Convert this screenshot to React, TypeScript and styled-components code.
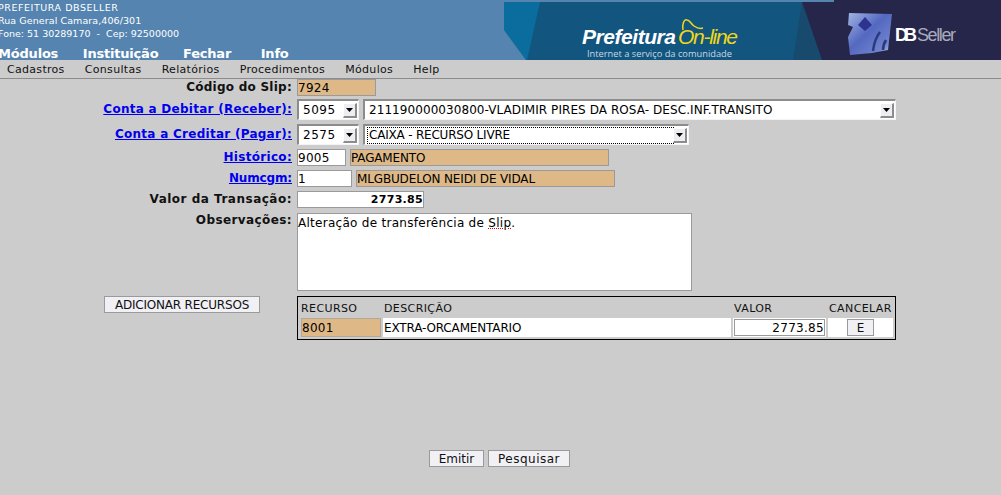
import styled, { createGlobalStyle } from "styled-components";

const GlobalStyle = createGlobalStyle`
  html, body {
    margin: 0;
    padding: 0;
    background: #cccccc;
    overflow: hidden;
  }
  body {
    font-family: "DejaVu Sans", sans-serif;
    font-size: 12px;
    color: #000;
  }
`;

const Page = styled.div`
  width: 1001px;
  height: 495px;
  display: flex;
  flex-direction: column;
`;

const Header = styled.header`
  height: 60px;
  background: #5584b0;
  display: flex;
  justify-content: space-between;
  overflow: hidden;
`;

const HeaderLeft = styled.div`
  display: flex;
  flex-direction: column;
  color: #fff;
`;

const Address = styled.div`
  margin-left: -2px;
  padding-top: 1px;
  white-space: nowrap;
`;

const AddressLine = styled.div<{ $spacing: number }>`
  font-size: 9.5px;
  line-height: 13px;
  letter-spacing: ${({ $spacing }) => $spacing}px;
`;

const TopNav = styled.nav`
  display: flex;
  gap: 24.6px;
  margin: 6px 0 0 -2px;
  font-size: 13px;
  font-weight: bold;
  line-height: 15px;
  letter-spacing: -0.2px;
`;

const TopNavItem = styled.span<{ $gap?: number }>`
  margin-right: ${({ $gap }) => $gap ?? 0}px;
`;

const Banner = styled.svg`
  width: 497px;
  height: 60px;
  display: block;
  flex: none;
`;

const MenuBar = styled.nav`
  height: 18px;
  border-bottom: 1px solid #8c8c8c;
  display: flex;
  align-items: center;
  gap: 20.2px;
  padding-left: 7px;
  font-size: 11px;
  letter-spacing: 0.3px;
  color: #111;
`;

const Form = styled.form`
  display: grid;
  grid-template-columns: 292px 1fr;
  column-gap: 5px;
  margin: 0;
`;

const Label = styled.div<{ $height: number; $top?: number; $spacing?: number }>`
  height: ${({ $height }) => $height}px;
  margin-top: ${({ $top }) => $top ?? 0}px;
  line-height: ${({ $height }) => $height}px;
  text-align: right;
  font-size: 12px;
  font-weight: bold;
  letter-spacing: ${({ $spacing }) => $spacing ?? 0.25}px;
  white-space: nowrap;
  color: #111;
`;

const TextLabel = styled(Label)`
  line-height: 14px;
`;

const LinkLabel = styled.a`
  color: #0000ee;
  text-decoration: underline;
  cursor: pointer;
`;

const Field = styled.div<{ $height: number; $top?: number; $gap?: number }>`
  height: ${({ $height }) => $height}px;
  margin-top: ${({ $top }) => $top ?? 0}px;
  display: flex;
  gap: ${({ $gap }) => $gap ?? 4}px;
`;

const Input = styled.input<{ $width: number; $locked?: boolean; $bold?: boolean; $right?: boolean; $spacing?: number }>`
  box-sizing: border-box;
  width: ${({ $width }) => $width}px;
  height: 100%;
  margin: 0;
  padding: 0;
  border: 1px solid #9a9a9a;
  border-radius: 0;
  outline: none;
  background: ${({ $locked }) => ($locked ? "#deb887" : "#fff")};
  font-family: "DejaVu Sans", sans-serif;
  font-size: ${({ $bold }) => ($bold ? 11 : 12)}px;
  letter-spacing: ${({ $spacing }) => $spacing ?? 0.3}px;
  color: #000;
  font-weight: ${({ $bold }) => ($bold ? "bold" : "normal")};
  text-align: ${({ $right }) => ($right ? "right" : "left")};
`;

const SelectBox = styled.div<{ $width: number }>`
  box-sizing: border-box;
  width: ${({ $width }) => $width}px;
  height: 21px;
  display: flex;
  align-items: center;
  justify-content: space-between;
  background: #fff;
  border-style: solid;
  border-width: 2px 1px 1px 2px;
  border-color: #8c8c8c #f4f4f4 #f4f4f4 #8c8c8c;
  padding: 0 1px 0 3px;
  font-size: 12px;
  white-space: nowrap;
`;

const SelectValue = styled.span<{ $focused?: boolean; $spacing: number }>`
  flex: 1;
  height: 15px;
  line-height: 15px;
  padding-left: 1px;
  letter-spacing: ${({ $spacing }) => $spacing}px;
  outline: ${({ $focused }) => ($focused ? "1px dotted #000" : "none")};
`;

const SelectArrow = styled.span`
  width: 14px;
  height: 15px;
  flex: none;
  display: flex;
  align-items: center;
  justify-content: center;
  background: #eeeef2;
  border-style: solid;
  border-width: 1px 2px 2px 1px;
  border-color: #fff #8c8c8c #8c8c8c #fff;
  box-sizing: border-box;
`;

const ArrowGlyph = styled.svg`
  width: 7px;
  height: 4px;
  display: block;
`;

const NotesBox = styled.div`
  box-sizing: border-box;
  width: 395px;
  height: 78px;
  background: #fff;
  border: 1px solid #9a9a9a;
  padding: 2px 0 0 0;
  font-size: 12px;
  line-height: 14px;
  letter-spacing: 0.28px;
`;

const Misspelled = styled.span`
  text-decoration: underline dotted #e00000;
`;

const ActionCell = styled.div`
  margin-top: 5px;
  padding-left: 104px;
`;

const PlainButton = styled.button<{ $width: number; $spacing?: number }>`
  box-sizing: border-box;
  width: ${({ $width }) => $width}px;
  height: 17px;
  margin: 0;
  padding: 0;
  border: 1px solid #9a9a9a;
  border-radius: 0;
  background: #f0f0f5;
  font-family: "DejaVu Sans", sans-serif;
  font-size: 12px;
  letter-spacing: ${({ $spacing }) => $spacing ?? 0}px;
  color: #111;
`;

const ResourceTable = styled.div`
  box-sizing: border-box;
  width: 599px;
  margin-top: 5px;
  padding: 0 0 2px 3px;
  border: 1px solid #000;
  display: flex;
  flex-direction: column;
`;

const ResourceGrid = styled.div<{ $height: number }>`
  display: grid;
  grid-template-columns: 80px 348px 93px 65px;
  column-gap: 2px;
  height: ${({ $height }) => $height}px;
  align-items: center;
`;

const HeadCell = styled.div`
  padding-top: 1px;
  font-size: 11px;
  letter-spacing: 0.4px;
  color: #111;
  &:not(:first-child) {
    padding-left: 1px;
  }
`;

const BodyCell = styled.div`
  height: 100%;
  background: #fff;
  display: flex;
  align-items: center;
  justify-content: center;
`;

const DescriptionCell = styled(BodyCell)`
  justify-content: flex-start;
  padding-left: 1px;
  letter-spacing: -0.15px;
`;

const RowInput = styled(Input)`
  height: 17px;
`;

const ResourceCode = styled(Input)`
  border-color: #b0a898;
`;

const Footer = styled.div`
  display: flex;
  justify-content: center;
  gap: 4px;
  margin-top: 110px;
  padding-right: 2px;
`;

const menuItems = ["Cadastros", "Consultas", "Relatórios", "Procedimentos", "Módulos", "Help"];

const Arrow = () => (
  <SelectArrow>
    <ArrowGlyph viewBox="0 0 7 4">
      <path d="M0 0h7L3.5 4z" fill="#000" />
    </ArrowGlyph>
  </SelectArrow>
);

const BannerArt = () => (
  <Banner viewBox="0 0 497 60">
    <defs>
      <linearGradient id="cube" x1="0" y1="0" x2="1" y2="1">
        <stop offset="0" stopColor="#a3b6e4" />
        <stop offset="0.45" stopColor="#5468c0" />
        <stop offset="0.8" stopColor="#6f82cc" />
        <stop offset="1" stopColor="#ccd4ec" />
      </linearGradient>
    </defs>
    <rect x="0" y="2" width="497" height="58" fill="#125680" />
    <path d="M0 2H36L23 60H22L0 30z" fill="#0b6d9e" />
    <path d="M0 30L22 60H0z" fill="#5584b0" />
    <path d="M298 2L318 60H289z" fill="#174a6c" />
    <path d="M298 2H497V60H318z" fill="#26264a" />
    <rect x="0" y="0" width="330" height="2" fill="#5584b0" />
    <rect x="330" y="0" width="167" height="2" fill="#26264a" />
    <text x="78" y="44" fontFamily="'Liberation Sans', sans-serif" fontSize="21" fontWeight="bold" fontStyle="italic" fill="#fff" textLength="94">
      Prefeitura
    </text>
    <text x="174" y="44" fontFamily="'Liberation Sans', sans-serif" fontSize="21" fontStyle="italic" fill="#f0d818" textLength="60">
      On-line
    </text>
    <path d="M179 30c-1-6 1-11 4-10 3 0 4 4 7 6 3 2 6 3 9 2" fill="none" stroke="#f0d818" strokeWidth="1.5" />
    <text x="83" y="57" fontFamily="'Open Sans', sans-serif" fontSize="9.5" fill="#c8d8e4" textLength="145" lengthAdjust="spacingAndGlyphs">
      Internet a serviço da comunidade
    </text>
    <path d="M345 13L388 14 386 32 384 50 368 53 346 55 344 37 349 27 344 25z" fill="url(#cube)" />
    <path d="M361 17l7 8-7 6-7-6z" fill="#2c3490" />
    <path d="M376 32c-4 5-6 11-7 19M382 40c-2 3-3 7-3 10" stroke="#2a3a80" strokeWidth="2.5" fill="none" />
    <text x="391" y="41" fontFamily="'Liberation Sans', sans-serif" fontSize="18" fontWeight="bold" fill="#fff" textLength="22">
      DB
    </text>
    <text x="413" y="41" fontFamily="'Liberation Sans', sans-serif" fontSize="18" fill="#a8aabb" textLength="39">
      Seller
    </text>
  </Banner>
);

export default function App() {
  return (
    <Page>
      <GlobalStyle />
      <Header>
        <HeaderLeft>
          <Address>
            <AddressLine $spacing={0.55}>PREFEITURA DBSELLER</AddressLine>
            <AddressLine $spacing={0.08}>Rua General Camara,406/301</AddressLine>
            <AddressLine $spacing={0}>Fone: 51 30289170 &nbsp;-&nbsp; Cep: 92500000</AddressLine>
          </Address>
          <TopNav>
            <TopNavItem>Módulos</TopNavItem>
            <TopNavItem>Instituição</TopNavItem>
            <TopNavItem $gap={5}>Fechar</TopNavItem>
            <TopNavItem>Info</TopNavItem>
          </TopNav>
        </HeaderLeft>
        <BannerArt />
      </Header>
      <MenuBar>
        {menuItems.map((item) => (
          <span key={item}>{item}</span>
        ))}
      </MenuBar>
      <Form>
        <Label $height={17}>Código do Slip:</Label>
        <Field $height={17}>
          <Input $width={79} $locked readOnly value="7924" />
        </Field>

        <Label $height={21} $top={3} $spacing={0.27}>
          <LinkLabel>Conta a Debitar (Receber):</LinkLabel>
        </Label>
        <Field $height={21} $top={3}>
          <SelectBox $width={62}>
            <SelectValue $spacing={0.5}>5095</SelectValue>
            <Arrow />
          </SelectBox>
          <SelectBox $width={533}>
            <SelectValue $spacing={0.07}>211190000030800-VLADIMIR PIRES DA ROSA- DESC.INF.TRANSITO</SelectValue>
            <Arrow />
          </SelectBox>
        </Field>

        <Label $height={21} $top={4} $spacing={0.27}>
          <LinkLabel>Conta a Creditar (Pagar):</LinkLabel>
        </Label>
        <Field $height={21} $top={4}>
          <SelectBox $width={62}>
            <SelectValue $spacing={0.5}>2575</SelectValue>
            <Arrow />
          </SelectBox>
          <SelectBox $width={326}>
            <SelectValue $focused $spacing={-0.2}>CAIXA - RECURSO LIVRE</SelectValue>
            <Arrow />
          </SelectBox>
        </Field>

        <Label $height={17} $top={4} $spacing={0.3}>
          <LinkLabel>Histórico:</LinkLabel>
        </Label>
        <Field $height={17} $top={4}>
          <Input $width={49} readOnly value="9005" />
          <Input $width={259} $locked $spacing={-0.15} readOnly value="PAGAMENTO" />
        </Field>

        <Label $height={17} $top={4} $spacing={-0.15}>
          <LinkLabel>Numcgm:</LinkLabel>
        </Label>
        <Field $height={17} $top={4}>
          <Input $width={55} readOnly value="1" />
          <Input $width={259} $locked $spacing={-0.15} readOnly value="MLGBUDELON NEIDI DE VIDAL" />
        </Field>

        <Label $height={17} $top={4} $spacing={0.5}>
          Valor da Transação:
        </Label>
        <Field $height={17} $top={4}>
          <Input $width={127} $bold $right readOnly value="2773.85" />
        </Field>

        <TextLabel $height={78} $top={5} $spacing={0.4}>
          Observações:
        </TextLabel>
        <Field $height={78} $top={5}>
          <NotesBox>
            Alteração de transferência de <Misspelled>Slip</Misspelled>.
          </NotesBox>
        </Field>

        <ActionCell>
          <PlainButton type="button" $width={156} $spacing={-0.2}>
            ADICIONAR RECURSOS
          </PlainButton>
        </ActionCell>
        <ResourceTable>
          <ResourceGrid $height={21}>
            <HeadCell>RECURSO</HeadCell>
            <HeadCell>DESCRIÇÃO</HeadCell>
            <HeadCell>VALOR</HeadCell>
            <HeadCell>CANCELAR</HeadCell>
          </ResourceGrid>
          <ResourceGrid $height={19}>
            <BodyCell>
              <ResourceCode $width={80} $locked readOnly value="8001" />
            </BodyCell>
            <DescriptionCell>EXTRA-ORCAMENTARIO</DescriptionCell>
            <BodyCell>
              <RowInput $width={91} $right readOnly value="2773.85" />
            </BodyCell>
            <BodyCell>
              <PlainButton type="button" $width={27}>
                E
              </PlainButton>
            </BodyCell>
          </ResourceGrid>
        </ResourceTable>
      </Form>
      <Footer>
        <PlainButton type="button" $width={55}>
          Emitir
        </PlainButton>
        <PlainButton type="button" $width={82} $spacing={0.5}>
          Pesquisar
        </PlainButton>
      </Footer>
    </Page>
  );
}
